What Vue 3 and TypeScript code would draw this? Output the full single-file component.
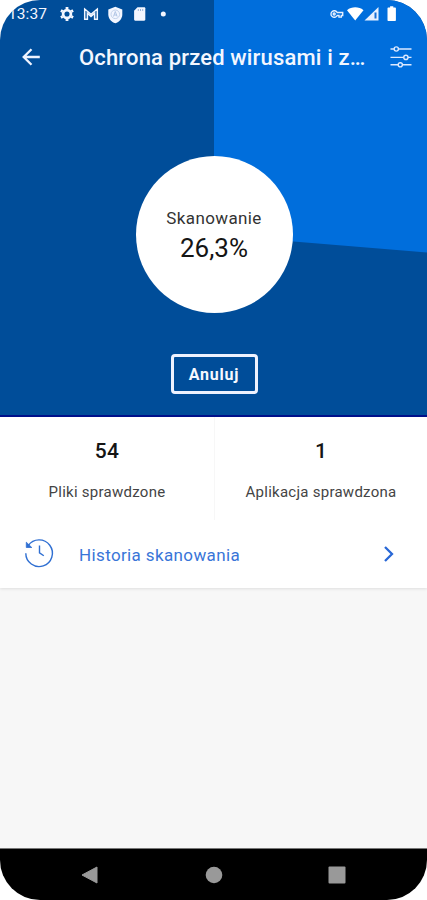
<script setup lang="ts">
import { computed } from 'vue'

const progress = 26.3
const progressLabel = progress.toFixed(1).replace('.', ',') + '%'

const stats = [
  { value: '54', label: 'Pliki sprawdzone', kind: 'files' },
  { value: '1', label: 'Aplikacja sprawdzona', kind: 'apps' },
]

// Sector of the scanned share, measured clockwise from the top of the dial.
const sector = computed(() => {
  const angle = (progress / 100) * 2 * Math.PI
  const x = 214 + 600 * Math.sin(angle)
  const y = 235 - 600 * Math.cos(angle)
  return `214,235 214,-365 814,-365 ${x.toFixed(1)},${y.toFixed(1)}`
})
</script>

<template>
  <div class="phone">
    <section class="hero">
      <svg class="sector" viewBox="0 0 427 415" width="427" height="415">
        <polygon :points="sector" fill="#006edc" />
      </svg>

      <div class="status">
        <span class="clock">13:37</span>
        <svg class="left-icons" width="120" height="20" viewBox="0 0 120 20">
          <g fill="none" stroke="#f3f6ff">
            <circle cx="11" cy="10" r="3.9" stroke-width="2.7" />
            <path d="M11 3v2M11 15v2M4.9 6.5l1.8 1M15.3 12.5l1.8 1M4.9 13.5l1.8-1M15.3 7.500l1.8-1" stroke-width="2.8" />
            <path d="M28.700 15.200V5l6.300 5.300L41.300 5v10.200h-2.700V9.300L35 12.400l-3.600-3.100v5.900z" stroke-width="1.5" />
          </g>
          <path d="M59.300 2.800l7 2.700v4.800c0 4.500-2.900 7.700-7 9-4.100-1.300-7-4.500-7-9V5.500z" fill="#f3f6ff" />
          <circle cx="59.300" cy="10.300" r="4.300" fill="none" stroke="#bccde8" stroke-width=".9" />
          <path d="M57.500 12.500l1.800-5 1.800 5M58.200 11h2.500" fill="none" stroke="#a9c0e2" stroke-width=".9" />
          <path d="M81.500 3.200h6.700c.7 0 1.100.4 1.100 1.100v11.300c0 .7-.4 1.100-1.100 1.100h-9c-.7 0-1.100-.4-1.100-1.100V6.700z" fill="#f3f6ff" />
          <path d="M82.300 5v2M84.500 5v2M86.700 5v2" stroke="#8eabd5" stroke-width=".9" />
          <circle cx="107.300" cy="10" r="2.500" fill="#f3f6ff" />
        </svg>
        <svg class="right-icons" width="72" height="20" viewBox="0 0 72 20">
          <g fill="none" stroke="#e6efff" stroke-width="1.4">
            <path d="M9.200 8.500A3.300 3.300 0 1 0 9.200 11.500H11v1.600h2.300v-1.600h1.400v-3z" />
            <circle cx="6.200" cy="10" r="1" />
          </g>
          <path d="M19 6.200c4.700-3.800 11.800-3.800 16.500 0L27.200 16.500z" fill="#fff" />
          <path d="M36.500 16.500L50.500 3v13.500z" fill="#e6efff" />
          <path d="M46.500 8.500h2v6h-2z" fill="#166fd6" />
          <path d="M60 3h1.800V1.900h3.200V3h1.800c.5 0 .8.3.8.8v12c0 .5-.3.800-.8.800H60c-.5 0-.8-.3-.8-.8v-12c0-.5.300-.8.800-.8z" transform="translate(.3 .4)" fill="#fff" />
        </svg>
      </div>

      <header class="toolbar">
        <svg class="back" width="22" height="22" viewBox="0 0 22 22" fill="none" stroke="#eef3ff" stroke-width="2.300">
          <path d="M19.800 11H4M11.500 3.200L3.700 11l7.800 7.800" />
        </svg>
        <h1>Ochrona przed wirusami i z…</h1>
        <svg class="tune" width="24" height="26" viewBox="0 0 24 26" fill="none" stroke="#dce9ff" stroke-width="1.400">
          <path d="M1.500 5h3.700M9.500 5h13M1.500 13.400h13.200M19 13.400h3.500M1.500 20.800h7.700M13.500 20.800h9" />
          <circle cx="7.300" cy="5" r="2.100" />
          <circle cx="16.900" cy="13.400" r="2.100" />
          <circle cx="11.300" cy="20.800" r="2.100" />
        </svg>
      </header>

      <div class="dial">
        <span class="dial-label">Skanowanie</span>
        <span class="dial-value">{{ progressLabel }}</span>
      </div>

      <button class="cancel" type="button">Anuluj</button>
    </section>

    <section class="card">
      <div class="stats">
        <div v-for="stat in stats" :key="stat.kind" class="stat" :class="stat.kind">
          <strong>{{ stat.value }}</strong>
          <span>{{ stat.label }}</span>
        </div>
      </div>
      <div class="history">
        <svg class="clock-icon" width="32" height="32" viewBox="0 0 32 32" fill="none" stroke="#2f6fd2" stroke-width="1.400">
          <path d="M5.200 7.600A13.300 13.300 0 1 1 2.800 15.200" />
          <path d="M16.500 7.500v7.300l4.300 3" />
          <path d="M3.300 4.200v5.300h5.500z" fill="#2f6fd2" stroke-width=".8" />
        </svg>
        <span>Historia skanowania</span>
        <svg class="chevron" width="14" height="18" viewBox="0 0 14 18" fill="none" stroke="#2968d6" stroke-width="2.300">
          <path d="M3 2l7 7-7 7" />
        </svg>
      </div>
    </section>

    <nav class="navbar">
      <svg width="20" height="20" viewBox="0 0 20 20"><path d="M17 2v16L2 10z" fill="#999" stroke="#999" stroke-linejoin="round" /></svg>
      <svg width="20" height="20" viewBox="0 0 20 20"><circle cx="10" cy="10" r="8.300" fill="#999" /></svg>
      <svg width="20" height="20" viewBox="0 0 20 20"><rect x="1.500" y="1.500" width="17" height="17" rx="1" fill="#999" /></svg>
    </nav>
  </div>
</template>

<style>
body {
  background: #fff;
}
</style>

<style scoped>
.phone {
  width: 427px;
  height: 900px;
  display: flex;
  flex-direction: column;
  overflow: hidden;
  border-radius: 40px;
  background: #f7f7f7;
  font-family: Roboto, "Liberation Sans", sans-serif;
}
.hero {
  position: relative;
  box-sizing: border-box;
  flex: none;
  height: 417px;
  display: flex;
  flex-direction: column;
  align-items: center;
  background: #004d99;
  border-bottom: 2px solid #00108a;
}
.sector {
  position: absolute;
  inset: 0;
}
.hero > :not(.sector) {
  position: relative;
}
.status {
  align-self: stretch;
  display: flex;
  align-items: center;
  height: 28px;
  padding-left: 8px;
}
.clock {
  width: 48px;
  color: #f3f6ff;
  font-size: 15.500px;
  line-height: 28px;
  letter-spacing: 0.1px;
}
.left-icons {
  margin-top: -1px;
}
.right-icons {
  margin-left: 152px;
  margin-top: -1px;
}
.toolbar {
  align-self: stretch;
  display: flex;
  align-items: center;
  height: 60px;
  padding-left: 20px;
}
.back {
  flex: none;
  margin-bottom: 2px;
}
.toolbar h1 {
  width: 292px;
  margin: 0 0 0 37px;
  white-space: nowrap;
  color: #f3f7ff;
  font-size: 22px;
  font-weight: 500;
  line-height: 32px;
  letter-spacing: 0.16px;
}
.tune {
  flex: none;
  margin-left: 18px;
  margin-bottom: 2px;
}
.dial {
  flex: none;
  display: flex;
  flex-direction: column;
  align-items: center;
  box-sizing: border-box;
  width: 157px;
  height: 157px;
  margin-top: 68px;
  margin-left: 1px;
  padding-top: 50px;
  border-radius: 50%;
  background: #fff;
}
.dial-label {
  color: #333;
  font-size: 17px;
  line-height: 24px;
  letter-spacing: 0.38px;
}
.dial-value {
  margin-top: 1px;
  color: #151515;
  font-size: 26px;
  line-height: 34px;
}
.cancel {
  box-sizing: border-box;
  width: 87px;
  height: 40px;
  margin-top: 41px;
  margin-left: 1px;
  padding: 1px 0 0;
  border: 3px solid #eef2ff;
  border-radius: 4px;
  background: #004d99;
  color: #f5f8ff;
  font: 700 16px/33px Roboto, "Liberation Sans", sans-serif;
  letter-spacing: 0.75px;
}
.card {
  flex: none;
  height: 171px;
  background: #fff;
  box-shadow: 0 1px 3px rgba(0, 0, 0, 0.1);
}
.stats {
  display: grid;
  grid-template-columns: 215px 212px;
  height: 103px;
}
.stat {
  display: flex;
  flex-direction: column;
  align-items: center;
  padding-top: 20px;
}
.files {
  border-right: 1px solid #f7f7f7;
}
.stat strong {
  color: #151515;
  font-size: 21px;
  font-weight: 500;
  line-height: 28px;
  letter-spacing: 0.2px;
}
.stat span {
  margin-top: 16px;
  color: #444;
  font-size: 15px;
  line-height: 22px;
  letter-spacing: 0.26px;
}
.history {
  display: flex;
  align-items: center;
  height: 68px;
  padding: 0 31px 0 23px;
}
.history span {
  flex: 1;
  margin-left: 24px;
  padding-top: 2px;
  color: #3975d8;
  font-size: 17px;
  line-height: 24px;
  letter-spacing: 0.37px;
}
.navbar {
  flex: none;
  display: flex;
  align-items: center;
  justify-content: space-between;
  box-sizing: border-box;
  height: 52px;
  margin-top: auto;
  padding: 0 80px 0 80px;
  border-top: 1px solid #777;
  background: #000;
}
</style>
